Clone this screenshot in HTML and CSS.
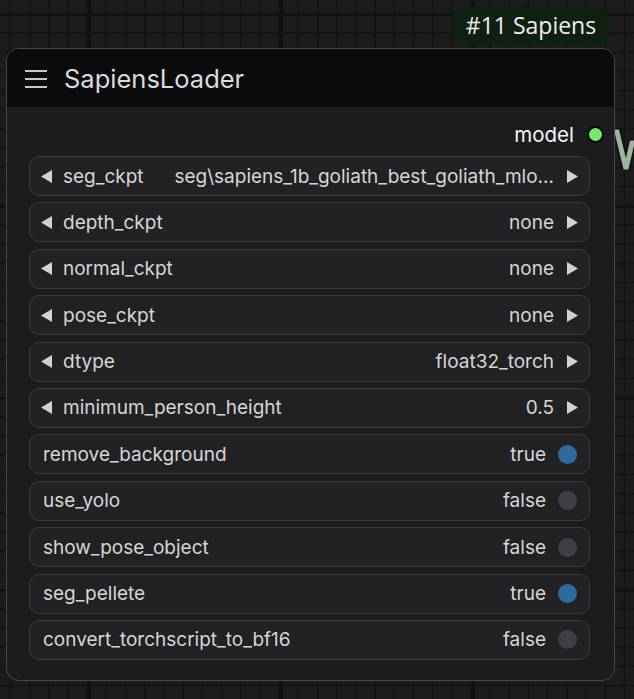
FILE: index.html
```html
<!DOCTYPE html>
<html>
<head>
<meta charset="utf-8">
<link rel="stylesheet" href="styles.css">
</head>
<body>
<div class="canvas">
  <div class="badge">#11 Sapiens</div>
  <svg class="link" width="24" height="70" viewBox="0 0 24 70">
    <polyline points="0,19 5,19 14,56 20,30 24,30" fill="none" stroke="#111" stroke-width="8" stroke-linejoin="miter"/>
    <polyline points="0,19 5,19 14,56 20,30 24,30" fill="none" stroke="#9fb49f" stroke-width="5" stroke-linejoin="miter"/>
  </svg>
  <div class="node">
    <div class="title">
      <svg class="menu" width="22" height="20" viewBox="0 0 22 20">
        <rect x="0" y="1" width="22" height="2" fill="#c8c8c8"/>
        <rect x="0" y="9" width="22" height="2" fill="#c8c8c8"/>
        <rect x="0" y="17" width="22" height="2" fill="#c8c8c8"/>
      </svg>
      <span class="title-text">SapiensLoader</span>
    </div>
    <div class="body">
      <div class="output">
        <span class="out-label">model</span>
        <span class="out-dot"></span>
      </div>
      <div class="widgets">
        <div class="w combo">
          <svg class="arr" width="12" height="13" viewBox="0 0 12 13"><polygon points="11,0 11,13 0,6.5" fill="#d2d2d2"/></svg>
          <span class="lbl">seg_ckpt</span>
          <span class="val">seg\sapiens_1b_goliath_best_goliath_mlo...</span>
          <svg class="arr" width="12" height="13" viewBox="0 0 12 13"><polygon points="1,0 1,13 12,6.5" fill="#d2d2d2"/></svg>
        </div>
        <div class="w combo">
          <svg class="arr" width="12" height="13" viewBox="0 0 12 13"><polygon points="11,0 11,13 0,6.5" fill="#d2d2d2"/></svg>
          <span class="lbl">depth_ckpt</span>
          <span class="val">none</span>
          <svg class="arr" width="12" height="13" viewBox="0 0 12 13"><polygon points="1,0 1,13 12,6.5" fill="#d2d2d2"/></svg>
        </div>
        <div class="w combo">
          <svg class="arr" width="12" height="13" viewBox="0 0 12 13"><polygon points="11,0 11,13 0,6.5" fill="#d2d2d2"/></svg>
          <span class="lbl">normal_ckpt</span>
          <span class="val">none</span>
          <svg class="arr" width="12" height="13" viewBox="0 0 12 13"><polygon points="1,0 1,13 12,6.5" fill="#d2d2d2"/></svg>
        </div>
        <div class="w combo">
          <svg class="arr" width="12" height="13" viewBox="0 0 12 13"><polygon points="11,0 11,13 0,6.5" fill="#d2d2d2"/></svg>
          <span class="lbl">pose_ckpt</span>
          <span class="val">none</span>
          <svg class="arr" width="12" height="13" viewBox="0 0 12 13"><polygon points="1,0 1,13 12,6.5" fill="#d2d2d2"/></svg>
        </div>
        <div class="w combo">
          <svg class="arr" width="12" height="13" viewBox="0 0 12 13"><polygon points="11,0 11,13 0,6.5" fill="#d2d2d2"/></svg>
          <span class="lbl">dtype</span>
          <span class="val">float32_torch</span>
          <svg class="arr" width="12" height="13" viewBox="0 0 12 13"><polygon points="1,0 1,13 12,6.5" fill="#d2d2d2"/></svg>
        </div>
        <div class="w combo">
          <svg class="arr" width="12" height="13" viewBox="0 0 12 13"><polygon points="11,0 11,13 0,6.5" fill="#d2d2d2"/></svg>
          <span class="lbl">minimum_person_height</span>
          <span class="val">0.5</span>
          <svg class="arr" width="12" height="13" viewBox="0 0 12 13"><polygon points="1,0 1,13 12,6.5" fill="#d2d2d2"/></svg>
        </div>
        <div class="w toggle">
          <span class="lbl">remove_background</span>
          <span class="val">true</span>
          <span class="dot on"></span>
        </div>
        <div class="w toggle">
          <span class="lbl">use_yolo</span>
          <span class="val">false</span>
          <span class="dot"></span>
        </div>
        <div class="w toggle">
          <span class="lbl">show_pose_object</span>
          <span class="val">false</span>
          <span class="dot"></span>
        </div>
        <div class="w toggle">
          <span class="lbl">seg_pellete</span>
          <span class="val">true</span>
          <span class="dot on"></span>
        </div>
        <div class="w toggle">
          <span class="lbl">convert_torchscript_to_bf16</span>
          <span class="val">false</span>
          <span class="dot"></span>
        </div>
      </div>
    </div>
  </div>
</div>
</body>
</html>
```

FILE: styles.css
```css
html, body {
  margin: 0;
  padding: 0;
}
body {
  width: 634px;
  height: 699px;
  overflow: hidden;
  font-family: Inter, "Liberation Sans", sans-serif;
}
.canvas {
  position: relative;
  width: 634px;
  height: 699px;
  background-color: #1c1c1c;
  background-image:
    linear-gradient(to right, #111 0, #111 3px, transparent 3px),
    linear-gradient(to bottom, #111 0, #111 3px, transparent 3px),
    linear-gradient(to right, #141414 0, #141414 2px, transparent 2px),
    linear-gradient(to bottom, #141414 0, #141414 2px, transparent 2px);
  background-size: 192px 192px, 192px 192px, 19.2px 19.2px, 19.2px 19.2px;
  background-position: 88px 0, 0 13px, 9.5px 0, 0 13px;
}
.badge {
  position: absolute;
  left: 453px;
  top: 7px;
  width: 156px;
  height: 38px;
  box-sizing: border-box;
  border-radius: 11px;
  background: #0f2013;
  color: #ededed;
  font-family: "Open Sans", "Noto Sans", sans-serif;
  font-size: 23px;
  line-height: 37px;
  text-align: center;
}
.link {
  position: absolute;
  left: 612px;
  top: 113px;
}
.node {
  position: absolute;
  left: 6px;
  top: 48px;
  width: 609px;
  height: 633px;
  box-sizing: border-box;
  border: 1px solid #46464c;
  border-radius: 13px;
  background: #1c1c1e;
  overflow: hidden;
}
.title {
  height: 58px;
  background: #0b0b0d;
  display: flex;
  align-items: center;
  padding-left: 18px;
  gap: 17px;
}
.menu {
  display: block;
  margin-top: 1px;
}
.title-text {
  color: #dadada;
  font-size: 25.5px;
}
.body {
  padding: 0 24px 0 22px;
}
.output {
  height: 40px;
  margin-top: 7px;
  display: flex;
  align-items: center;
  justify-content: flex-end;
  margin-right: -14px;
  gap: 13px;
}
.out-label {
  color: #f4f4f4;
  font-size: 20.5px;
}
.out-dot {
  width: 13px;
  height: 13px;
  border-radius: 50%;
  background: #74e86c;
  border: 2px solid #0a0a0a;
}
.widgets {
  margin-top: 2px;
  display: flex;
  flex-direction: column;
  gap: 6.4px;
}
.w {
  height: 40px;
  box-sizing: border-box;
  border: 1.5px solid #3b3b41;
  border-radius: 10px;
  background: #222225;
  display: flex;
  align-items: center;
  color: #d6d6d6;
  font-size: 19px;
  white-space: nowrap;
}
.combo {
  padding: 0 11px 0 11px;
}
.combo .lbl {
  margin-left: 10px;
  flex: none;
}
.combo .val {
  flex: 1;
  text-align: right;
  margin-right: 12px;
  margin-left: 20px;
  min-width: 0;
}
.arr {
  flex: none;
  display: block;
}
.toggle {
  padding: 0 12px 0 13px;
}
.toggle .lbl {
  flex: 1;
}
.toggle .val {
  margin-right: 12px;
}
.dot {
  width: 19px;
  height: 19px;
  border-radius: 50%;
  background: #3f3f46;
  flex: none;
}
.dot.on {
  background: #2f6a9c;
}
```
